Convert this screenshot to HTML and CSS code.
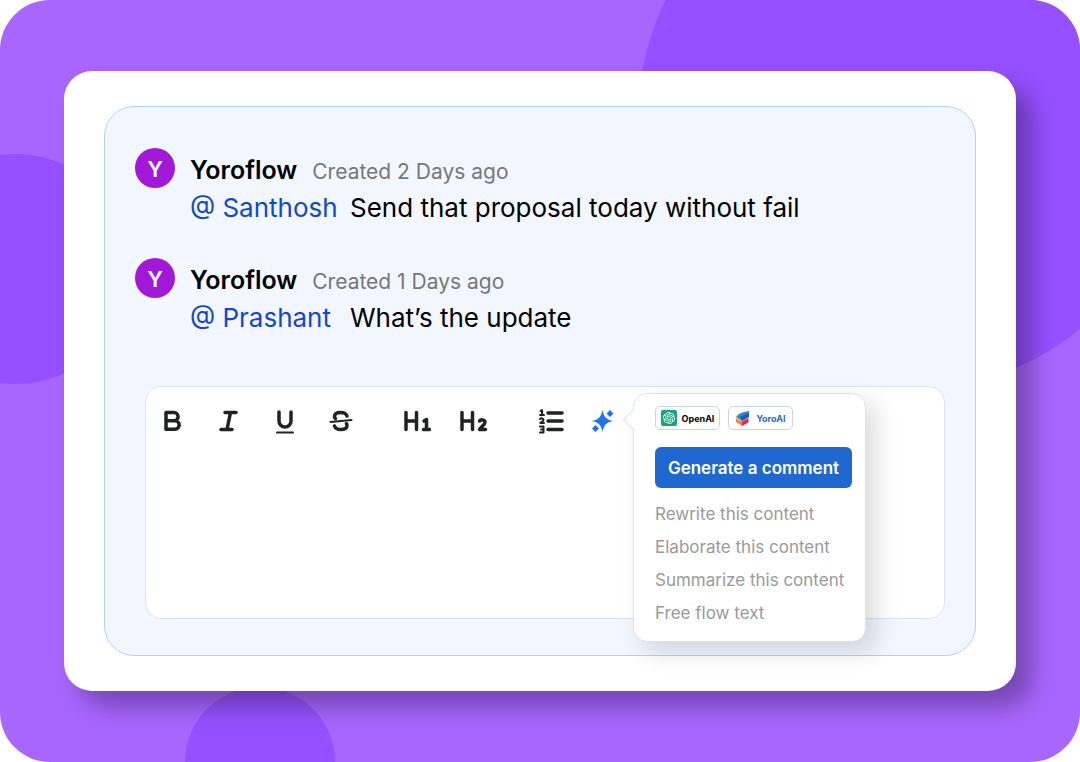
FILE: index.html
```html
<!DOCTYPE html>
<html lang="en">
<head>
    <meta charset="UTF-8">
    <meta name="viewport" content="width=device-width, initial-scale=1.0">
    <title>Yoroflow Comments</title>
    <link rel="stylesheet" href="styles.css">
</head>
<body>
    <main class="scene">
        <span class="circle circle-top"></span>
        <span class="circle circle-left"></span>
        <span class="circle circle-bottom"></span>

        <div class="card">
            <section class="panel">
                <article class="comment">
                    <div class="avatar">Y</div>
                    <div class="comment-body">
                        <div class="comment-head">
                            <span class="author">Yoroflow</span>
                            <span class="created">Created 2 Days ago</span>
                        </div>
                        <div class="comment-text">
                            <a class="mention" href="#">@ Santhosh</a>
                            <span>Send that proposal today without fail</span>
                        </div>
                    </div>
                </article>

                <article class="comment">
                    <div class="avatar">Y</div>
                    <div class="comment-body">
                        <div class="comment-head">
                            <span class="author">Yoroflow</span>
                            <span class="created">Created 1 Days ago</span>
                        </div>
                        <div class="comment-text">
                            <a class="mention" href="#">@ Prashant</a>
                            <span>What’s the update</span>
                        </div>
                    </div>
                </article>

                <div class="editor">
                    <div class="toolbar">
                        <div class="tool-group">
                            <button class="tool" aria-label="Bold">
                                <svg viewBox="0 0 24 24"><path d="M5 3.6h8a4.1 4.1 0 0 1 0 8.200H5zM5 11.800h9a4.2 4.2 0 0 1 0 8.400H5z"/></svg>
                            </button>
                            <button class="tool" aria-label="Italic">
                                <svg viewBox="0 0 24 24"><path d="M8 3.500h11M4 20.500h11M13.500 3.500l-3.500 17"/></svg>
                            </button>
                            <button class="tool" aria-label="Underline">
                                <svg viewBox="0 0 24 24"><path d="M6 3v9a6 6 0 0 0 12 0V3"/><path class="thin" d="M4 23.500h16"/></svg>
                            </button>
                            <button class="tool" aria-label="Strikethrough">
                                <svg viewBox="0 0 24 24"><path d="M18 7c-.8-2.300-3-3.500-6.300-3.500C8 3.500 5.500 5 5.500 7.500c0 1 .4 1.700 1 2.200M5.500 17c.8 2.300 3 3.500 6.300 3.500 3.700 0 6.200-1.500 6.200-4 0-.8-.2-1.400-.6-1.900"/><path class="thin" d="M1.500 13l21-2"/></svg>
                            </button>
                        </div>
                        <div class="tool-group tool-group-narrow">
                            <button class="tool tool-heading" aria-label="Heading 1">
                                <svg viewBox="0 0 28 24"><path d="M2 3.500v17M12.500 3.500v17M2 12h10.500M20 12l2.500-1.500v10M19.500 20.500h6"/></svg>
                            </button>
                            <button class="tool tool-heading" aria-label="Heading 2">
                                <svg viewBox="0 0 28 24"><path d="M2 3.500v17M12.500 3.500v17M2 12h10.500M19.500 12c1-1.600 5.500-1.700 5.500 1.200 0 2.300-3.500 4-5.500 7.300h6"/></svg>
                            </button>
                        </div>
                        <div class="tool-group tool-group-narrow">
                            <button class="tool" aria-label="Numbered list">
                                <svg viewBox="0 0 24 24"><path d="M9 4h14M9 12h14M9 20.500h14"/><path class="digits" d="M1.500 2L3 1v5M1 6h4M1 10c1-1 3.500-.8 3.500.7S2.500 12.700 1.300 14H5M1 17.500h3.500v6H1M2 20.500h2"/></svg>
                            </button>
                            <button class="tool tool-ai" aria-label="AI assistant">
                                <svg viewBox="0 0 24 24"><path d="M11.500 1c1.500 7 3.500 9.500 11 11-7.500 1.500-9.500 4-11 11-1.500-7-3.500-9.500-11-11 7.500-1.500 9.500-4 11-11zM19 1l3.500 3.500L19 8l-3.500-3.500zM4.500 16L8 19.500 4.500 23 1 19.500z"/></svg>
                            </button>
                        </div>
                    </div>

                    <div class="menu">
                        <div class="models">
                            <button class="model">
                                <svg viewBox="-4 -4 32 32">
                                    <rect x="-4" y="-4" width="32" height="32" rx="4" fill="#17a37f"/>
                                    <path fill="#fff" d="M22.2819 9.8211a5.9847 5.9847 0 0 0-.5157-4.9108 6.0462 6.0462 0 0 0-6.5098-2.9A6.0651 6.0651 0 0 0 4.9807 4.1818a5.9847 5.9847 0 0 0-3.9977 2.9 6.0462 6.0462 0 0 0 .7427 7.0966 5.98 5.98 0 0 0 .511 4.9107 6.051 6.051 0 0 0 6.5146 2.9001A5.9847 5.9847 0 0 0 13.2599 24a6.0557 6.0557 0 0 0 5.7718-4.2058 5.9894 5.9894 0 0 0 3.9977-2.9001 6.0557 6.0557 0 0 0-.7475-7.0729zm-9.022 12.6081a4.4755 4.4755 0 0 1-2.8764-1.0408l.1419-.0804 4.7783-2.7582a.7948.7948 0 0 0 .3927-.6813v-6.7369l2.02 1.1686a.071.071 0 0 1 .038.052v5.5826a4.504 4.504 0 0 1-4.4945 4.4944zm-9.6607-4.1254a4.4708 4.4708 0 0 1-.5346-3.0137l.142.0852 4.783 2.7582a.7712.7712 0 0 0 .7806 0l5.8428-3.3685v2.3324a.0804.0804 0 0 1-.0332.0615L9.74 19.9502a4.4992 4.4992 0 0 1-6.1408-1.6464zM2.3408 7.8956a4.485 4.485 0 0 1 2.3655-1.9728V11.6a.7664.7664 0 0 0 .3879.6765l5.8144 3.3543-2.0201 1.1685a.0757.0757 0 0 1-.071 0l-4.8303-2.7865A4.504 4.504 0 0 1 2.3408 7.872zm16.5963 3.8558L13.1038 8.364 15.1192 7.2a.0757.0757 0 0 1 .071 0l4.8303 2.7913a4.4944 4.4944 0 0 1-.6765 8.1042v-5.6772a.79.79 0 0 0-.407-.667zm2.0107-3.0231l-.142-.0852-4.7735-2.7818a.7759.7759 0 0 0-.7854 0L9.409 9.2297V6.8974a.0662.0662 0 0 1 .0284-.0615l4.8303-2.7866a4.4992 4.4992 0 0 1 6.6802 4.66zM8.3065 12.863l-2.02-1.1638a.0804.0804 0 0 1-.038-.0567V6.0742a4.4992 4.4992 0 0 1 7.3757-3.4537l-.142.0805L8.704 5.459a.7948.7948 0 0 0-.3927.6813zm1.0976-2.3654l2.602-1.4998 2.6069 1.4998v2.9994l-2.5974 1.4997-2.6067-1.4997Z"/>
                                </svg>
                                OpenAI
                            </button>
                            <button class="model model-yoro">
                                <svg viewBox="0 0 16 16">
                                    <path fill="#2c88c9" d="M1 7c2-3 6-5 13-6v6l-7 4z"/>
                                    <path fill="#1f5f9c" d="M5 7l9-4v4l-7 4z"/>
                                    <path fill="#f58a2c" d="M1 8l6 3.500V16l-6-4z"/>
                                    <path fill="#d42a68" d="M7 11.500L13.500 8v4.500L7 16z"/>
                                </svg>
                                YoroAI
                            </button>
                        </div>
                        <button class="generate">Generate a comment</button>
                        <button class="menu-item">Rewrite this content</button>
                        <button class="menu-item">Elaborate this content</button>
                        <button class="menu-item">Summarize this content</button>
                        <button class="menu-item">Free flow text</button>
                    </div>
                </div>
            </section>
        </div>
    </main>
</body>
</html>
```
FILE: styles.css
```css
* {
    box-sizing: border-box;
}
body {
    margin: 0;
    font-family: Inter, "Open Sans", sans-serif;
    background-color: #fff;
}
button {
    font-family: inherit;
    border: none;
    padding: 0;
    background: none;
    cursor: pointer;
}
.scene {
    position: relative;
    overflow: hidden;
    display: flex;
    min-height: 100vh;
    padding: 71px 64px;
    border-radius: 50px;
    background-color: #a866ff;
}
.circle {
    position: absolute;
    border-radius: 50%;
    background-color: #9650ff;
}
.circle-top {
    width: 542px;
    height: 542px;
    top: -152px;
    right: -100px;
}
.circle-left {
    width: 230px;
    height: 230px;
    top: 154px;
    left: -99px;
}
.circle-bottom {
    width: 150px;
    height: 150px;
    bottom: -75px;
    left: 185px;
}
.card {
    position: relative;
    flex: 1;
    display: flex;
    padding: 35px 40px;
    border-radius: 28px;
    background-color: #fff;
    box-shadow: 16px 16px 24px rgba(0, 0, 0, 0.3);
}
.panel {
    flex: 1;
    display: flex;
    flex-direction: column;
    padding: 41px 30px 36px;
    border: 1px solid #acd2fb;
    border-radius: 30px;
    background-color: #f2f7ff;
}
.comment {
    display: flex;
    gap: 15px;
    height: 110px;
}
.avatar {
    width: 40px;
    height: 40px;
    border-radius: 50%;
    background-color: #a119d7;
    color: #fff;
    font-size: 22px;
    font-weight: 600;
    line-height: 42px;
    text-align: center;
}
.comment-head {
    display: flex;
    align-items: baseline;
    gap: 15px;
    line-height: 44px;
}
.author {
    font-size: 25px;
    font-weight: 600;
}
.created {
    color: #777;
    font-size: 21px;
}
.comment-text {
    display: flex;
    font-size: 26px;
    line-height: 28px;
}
.mention {
    width: 160px;
    color: #1246cf;
    text-decoration: none;
}
.editor {
    position: relative;
    flex: 1;
    margin: 18px 0 0 10px;
    padding: 22px 15px;
    border: 1px solid #d7e5fb;
    border-radius: 16px;
    background-color: #fff;
}
.toolbar {
    display: flex;
    gap: 51px;
}
.tool-group {
    display: flex;
    gap: 32px;
}
.tool-group-narrow {
    gap: 28px;
}
.tool {
    width: 24px;
    height: 24px;
}
.tool svg {
    display: block;
    width: 100%;
    height: 100%;
    overflow: visible;
    fill: none;
    stroke: #202322;
    stroke-width: 3.5;
    stroke-linecap: round;
    stroke-linejoin: round;
}
.tool-heading {
    width: 28px;
}
.tool .thin,
.tool .digits {
    stroke-width: 2;
}
.tool-ai svg {
    fill: #1f74e8;
    stroke: none;
}
.menu {
    position: absolute;
    top: 6px;
    right: 78px;
    width: 233px;
    padding: 12px 13px 12px 21px;
    border: 1px solid #d7e2f8;
    border-radius: 14px;
    background-color: #fff;
    box-shadow: 10px 10px 24px rgba(0, 0, 0, 0.14);
}
.menu::before {
    content: "";
    position: absolute;
    top: 18px;
    left: -8px;
    width: 14px;
    height: 14px;
    border: solid #d7e2f8;
    border-width: 0 0 1px 1px;
    background-color: #fff;
    transform: rotate(45deg);
}
.models {
    display: flex;
    gap: 8px;
    margin-bottom: 17px;
}
.model {
    display: flex;
    align-items: center;
    justify-content: center;
    gap: 5px;
    width: 65px;
    height: 24px;
    border: 1px solid #c9d4e5;
    border-radius: 5px;
    color: #000;
    font-size: 9px;
    font-weight: 700;
}
.model svg {
    width: 16px;
    height: 16px;
}
.model-yoro {
    color: #1e66d0;
}
.generate {
    display: block;
    width: 100%;
    height: 41px;
    margin-bottom: 9px;
    border-radius: 6px;
    background-color: #1e68d0;
    color: #fff;
    font-size: 17px;
    font-weight: 600;
}
.menu-item {
    display: block;
    height: 33px;
    color: #999;
    font-size: 17px;
}
```
